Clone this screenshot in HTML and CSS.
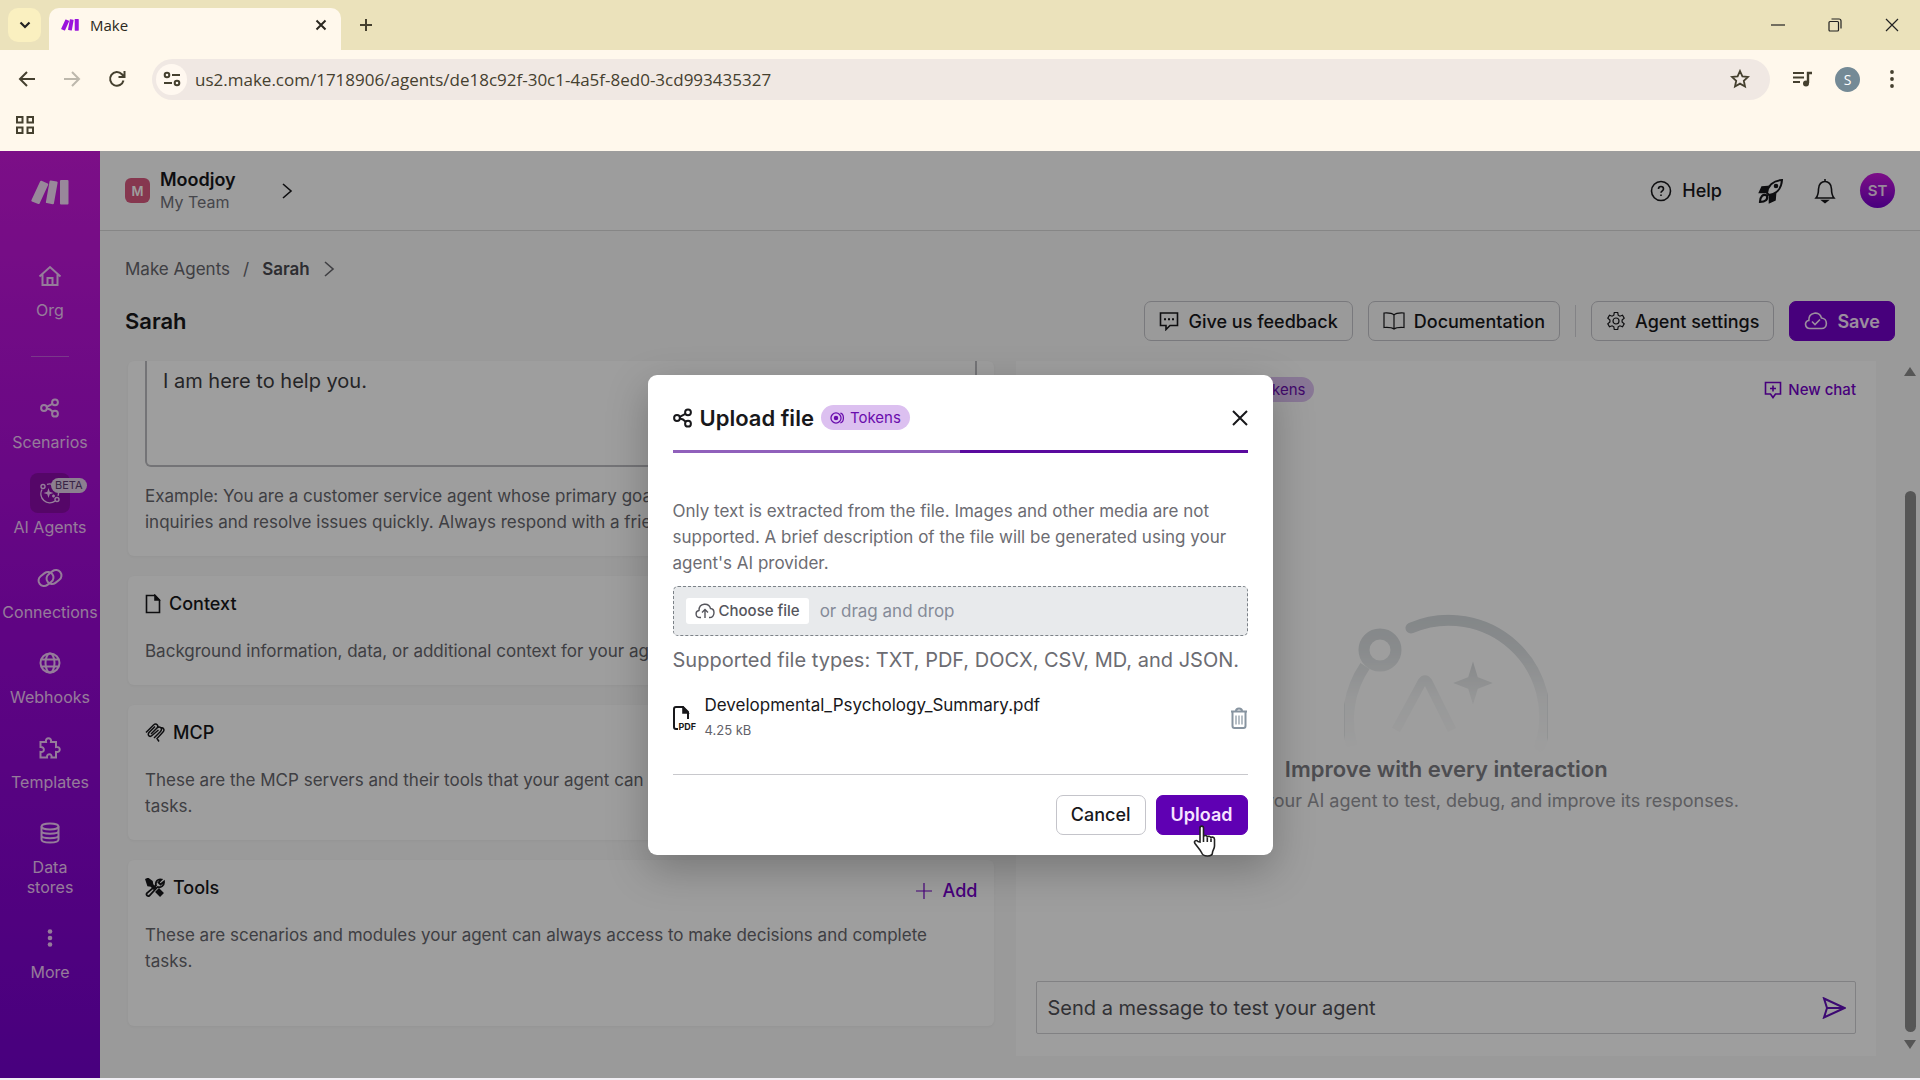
FILE: index.html
```html
<!DOCTYPE html>
<html lang="en">
<head>
    <meta charset="UTF-8">
    <meta name="viewport" content="width=device-width, initial-scale=1.0">
    <title>Make</title>
    <link rel="stylesheet" href="styles.css">
</head>
<body>
    <!-- shared icons -->
    <svg class="defs" width="0" height="0">
        <symbol id="logo" viewBox="0 0 38 25">
            <path d="M10.500 .8l6.200 2.700c.5.300.7.8.5 1.300L8.600 23.500c-.2.500-.8.700-1.300.5L.9 21.500c-.5-.3-.7-.8-.5-1.300L9.200 1.300c.2-.5.8-.7 1.300-.5z"/>
            <path d="M19.800.4l6 1.100c.6.100.9.6.8 1.200l-3.700 20.700c-.1.600-.6.900-1.200.8l-6-1.100c-.6-.1-.9-.6-.8-1.200L18.600 1.200c.1-.6.600-.9 1.200-.8z"/>
            <rect x="29" y="0" width="8.500" height="24.500" rx="1"/>
        </symbol>
        <symbol id="share" viewBox="0 0 20 20">
            <circle cx="4" cy="10" r="2.900"/><circle cx="15" cy="4.300" r="2.900"/><circle cx="15" cy="15.700" r="2.900"/>
            <path d="M6.700 8.900l5.700-3M6.900 10.400c3 .3 4.300 1.500 5.700 3.300"/>
        </symbol>
        <symbol id="chevron" viewBox="0 0 12 18"><path d="M2 2l8 7-8 7"/></symbol>
        <symbol id="coins" viewBox="0 0 20 16">
            <circle cx="7.500" cy="8" r="6.300"/><circle cx="7.500" cy="8" r="2" fill="currentColor"/><path d="M13 2c5 1 5 11 0 12"/>
        </symbol>
    </svg>

    <header class="browser">
        <div class="tabs">
            <button class="tab-search" aria-label="Search tabs"><svg width="12" height="8" viewBox="0 0 12 8"><path d="M1.500 1.500L6 6l4.500-4.500" stroke-width="2.200"/></svg></button>
            <div class="tab">
                <svg class="favicon" width="18" height="12"><use href="#logo"/></svg>
                <span>Make</span>
                <button class="tab-close" aria-label="Close tab"><svg width="12" height="12" viewBox="0 0 12 12"><path d="M1.500 1.500l9 9M10.500 1.500l-9 9" stroke-width="2"/></svg></button>
            </div>
            <button class="tab-new" aria-label="New tab"><svg width="14" height="14" viewBox="0 0 14 14"><path d="M7 1v12M1 7h12" stroke-width="2"/></svg></button>
            <div class="window-buttons">
                <button aria-label="Minimize"><svg width="14" height="14" viewBox="0 0 14 14"><path d="M0 7h14"/></svg></button>
                <button aria-label="Restore"><svg width="14" height="14" viewBox="0 0 14 14"><rect x="1" y="3.500" width="9.500" height="9.500" rx="1"/><path d="M3.500 1H11a2 2 0 0 1 2 2v7.500"/></svg></button>
                <button aria-label="Close"><svg width="14" height="14" viewBox="0 0 14 14"><path d="M1 1l12 12M13 1L1 13"/></svg></button>
            </div>
        </div>
        <div class="toolbar">
            <button aria-label="Back"><svg width="18" height="18" viewBox="0 0 18 18"><path d="M17 9H2.500M9 2L2 9l7 7" stroke-width="2"/></svg></button>
            <button class="off" aria-label="Forward"><svg width="18" height="18" viewBox="0 0 18 18"><path d="M1 9h14.500M9 2l7 7-7 7" stroke-width="2"/></svg></button>
            <button aria-label="Reload"><svg width="18" height="18" viewBox="0 0 18 18"><path d="M15.500 10.500a6.800 6.800 0 1 1-1.600-6.200L16 6.500M16.500 1v6h-6" stroke-width="2"/></svg></button>
            <div class="address">
                <span class="site-info"><svg width="18" height="16" viewBox="0 0 18 16"><circle cx="4" cy="4" r="2.300" stroke-width="2"/><circle cx="14" cy="12" r="2.300" stroke-width="2"/><path d="M9 4h8M1 12h8" stroke-width="2"/></svg></span>
                <input class="url" type="text" aria-label="Address" value="us2.make.com/1718906/agents/de18c92f-30c1-4a5f-8ed0-3cd993435327">
                <button aria-label="Bookmark"><svg width="20" height="20" viewBox="0 0 20 20"><path d="M10 2l2.400 5.300 5.600.6-4.200 3.900 1.200 5.700L10 14.600l-5 2.900 1.200-5.700L2 7.900l5.600-.6z" stroke-width="1.800"/></svg></button>
            </div>
            <button aria-label="Media controls"><svg width="20" height="16" viewBox="0 0 20 16"><path d="M0 2h11M0 6.500h11M0 11h7" stroke-width="2"/><path d="M15 12V2h4" stroke-width="2.400"/><circle cx="13" cy="12.500" r="3" fill="currentColor" stroke="none"/></svg></button>
            <span class="profile">S</span>
            <button aria-label="Browser menu"><svg width="4" height="18" viewBox="0 0 4 18"><g fill="currentColor" stroke="none"><circle cx="2" cy="2" r="1.900"/><circle cx="2" cy="9" r="1.900"/><circle cx="2" cy="16" r="1.900"/></g></svg></button>
        </div>
        <div class="bookmarks">
            <button aria-label="Apps"><svg width="18" height="18" viewBox="0 0 18 18"><path d="M1 1h5.500v5.500H1zM11.500 1H17v5.500h-5.500zM1 11.500h5.500V17H1zM11.500 11.500H17V17h-5.500z" stroke-width="2"/></svg></button>
        </div>
    </header>

    <div class="app">
        <nav class="sidebar">
            <svg class="logo" width="38" height="25"><use href="#logo"/></svg>
            <a href="#" class="nav-item">
                <span class="nav-icon"><svg width="24" height="22" viewBox="0 0 24 22"><path d="M1.500 11.500L12 2l10.500 9.500M4.500 9.500V20h15V9.500M9.500 20v-7h5v7"/></svg></span>
                Org
            </a>
            <hr>
            <a href="#" class="nav-item">
                <span class="nav-icon"><svg width="20" height="20"><use href="#share"/></svg></span>
                Scenarios
            </a>
            <a href="#" class="nav-item active">
                <span class="nav-icon">
                    <svg class="thin" width="22" height="22" viewBox="0 0 22 22"><path d="M8 2.300a9 9 0 0 1 11 11.500M16 19.200A9 9 0 0 1 3 7.500"/><circle cx="4" cy="4.500" r="2"/><circle cx="18" cy="17.500" r="2"/><path d="M9.500 6l1.200 3.800 3.800 1.200-3.800 1.200L9.500 16l-1.200-3.800L4.500 11l3.800-1.200z" fill="currentColor" stroke="none"/><path d="M14.500 12.500v3M13 14h3"/></svg>
                    <span class="beta">BETA</span>
                </span>
                AI Agents
            </a>
            <a href="#" class="nav-item">
                <span class="nav-icon"><svg width="26" height="22" viewBox="0 0 26 22"><rect x="1" y="6.500" width="16" height="11" rx="5.500" transform="rotate(-38 9 12)"/><rect x="9" y="4.500" width="16" height="11" rx="5.500" transform="rotate(-38 17 10)"/></svg></span>
                Connections
            </a>
            <a href="#" class="nav-item">
                <span class="nav-icon"><svg width="22" height="22" viewBox="0 0 22 22"><circle cx="11" cy="11" r="9.500"/><ellipse cx="11" cy="11" rx="4.500" ry="9.500"/><path d="M2.500 7.500h17M2.500 14.500h17"/></svg></span>
                Webhooks
            </a>
            <a href="#" class="nav-item">
                <span class="nav-icon"><svg width="22" height="22" viewBox="0 0 22 22"><path d="M1.500 5h5.500c-1-5 6-5 5 0h5v5c5-1 5 6 0 5v5.500h-4.500c1-4.500-5-4.500-4.500 0H1.500V15c4.500 1 4.500-5.500 0-5z"/></svg></span>
                Templates
            </a>
            <a href="#" class="nav-item">
                <span class="nav-icon"><svg width="20" height="22" viewBox="0 0 20 22"><ellipse cx="10" cy="4.500" rx="8.500" ry="3"/><path d="M1.500 4.500v13c0 4 17 4 17 0v-13M1.500 9c0 3.500 17 3.500 17 0M1.500 13.500c0 3.500 17 3.500 17 0"/></svg></span>
                Data<br>stores
            </a>
            <a href="#" class="nav-item">
                <span class="nav-icon"><svg width="6" height="18" viewBox="0 0 6 18"><g fill="currentColor" stroke="none"><circle cx="3" cy="2.500" r="2.300"/><circle cx="3" cy="9" r="2.300"/><circle cx="3" cy="15.500" r="2.300"/></g></svg></span>
                More
            </a>
        </nav>

        <div class="main">
            <div class="topbar">
                <span class="team-badge">M</span>
                <div class="team">
                    <strong>Moodjoy</strong>
                    <span>My Team</span>
                </div>
                <button class="team-open" aria-label="Switch team"><svg width="12" height="18"><use href="#chevron"/></svg></button>
                <div class="topbar-right">
                    <a href="#" class="help"><svg width="22" height="22" viewBox="0 0 22 22"><circle cx="11" cy="11" r="9.500"/><path d="M8.500 9c0-3.300 5-3.300 5 0 0 1.800-2.500 1.800-2.500 3.700M11 14.500v1.500"/></svg>Help</a>
                    <button aria-label="What's new"><svg width="26" height="26" viewBox="0 0 26 26"><path d="M9 15c1-7 6-12.500 15-13-.5 9-6 14-13 15z" stroke-width="2"/><circle cx="18" cy="8" r="1.500" fill="currentColor"/><path d="M10 8.500L4 9l-2.500 5.500H8zM17.500 16L17 22l-5.500 2.500V18z" fill="currentColor"/><path d="M9 17.500c-4-2-7 1-7 6.500 5.500 0 8-2.500 7-6.500z" stroke-width="2.200"/></svg></button>
                    <button aria-label="Notifications"><svg width="22" height="26" viewBox="0 0 22 26"><path d="M11 1v2.500M2 20c2-2.500 2.500-5 2.500-9 0-10 13-10 13 0 0 4 .5 6.500 2.500 9z"/><path d="M8.500 22.500h5l-2.500 2z" fill="currentColor"/></svg></button>
                    <span class="avatar">ST</span>
                </div>
            </div>

            <div class="breadcrumb">
                <a href="#">Make Agents</a>
                <span>/</span>
                <strong>Sarah</strong>
                <svg width="12" height="18"><use href="#chevron"/></svg>
            </div>

            <div class="title-row">
                <h1>Sarah</h1>
                <div class="actions">
                    <button class="btn"><svg width="20" height="20" viewBox="0 0 20 20"><path d="M1.500 2h17v12.500H11L7 18.500v-4H1.500z"/><path d="M5 8.300h2M9 8.300h2M13 8.300h2" stroke-width="2"/></svg>Give us feedback</button>
                    <button class="btn"><svg class="thin" width="22" height="20" viewBox="0 0 22 20"><path d="M11 4c-2-2-6-2.300-10-2v14.500c4-.3 8 0 10 1.500 2-1.500 6-1.800 10-1.500V2c-4-.3-8 0-10 2zm0 0v14"/></svg>Documentation</button>
                    <span class="separator"></span>
                    <button class="btn"><svg class="thin" width="20" height="20" viewBox="0 0 20 20"><circle cx="10" cy="10" r="3"/><path d="M8.300 1.500h3.400l.5 2.700 1.700 1 2.600-1 1.700 3-2.100 1.800v2l2.100 1.800-1.700 3-2.600-1-1.700 1-.5 2.700H8.300l-.5-2.700-1.700-1-2.600 1-1.700-3L3.900 11V9L1.800 7.200l1.700-3 2.600 1 1.700-1z"/></svg>Agent settings</button>
                    <button class="btn primary"><svg width="24" height="20" viewBox="0 0 24 20"><path d="M6 17.500C.5 17.500 0 10 4.800 9.500 4.500 1 15.500-.5 17.500 7c6.500.5 6.500 10.500 0 10.500z"/><path d="M8 10.500l3 3 5-5"/></svg>Save</button>
                </div>
            </div>

            <div class="columns">
                <div class="left">
                    <section class="card card-first">
                        <textarea class="prompt" aria-label="System prompt">I am here to help you.</textarea>
                        <p>Example: You are a customer service agent whose primary goal is to understand the customer's inquiries and resolve issues quickly. Always respond with a friendly and helpful tone.</p>
                    </section>
                    <section class="card">
                        <h2><svg width="16" height="20" viewBox="0 0 16 20"><path d="M1.500 1.500h8.500l4.500 4.500v12.500h-13z"/><path d="M10 1.500V6h4z" fill="currentColor"/></svg>Context</h2>
                        <p>Background information, data, or additional context for your agent.</p>
                    </section>
                    <section class="card">
                        <h2><svg width="20" height="20" viewBox="0 0 20 20"><path d="M1 9.500L8.500 2c3-2.500 5.500 1 3.500 3l-6 6M12 5c3-2.500 6 .5 3.500 3.500L9 15M10 3.500L4 9.500c-2 3 1 5 3 3L13.500 7M15.500 5c3-1 4.500 2 2.500 4l-6 6.500 2 3" stroke-width="1.500"/></svg>MCP</h2>
                        <p>These are the MCP servers and their tools that your agent can always access to complete<br>tasks.</p>
                    </section>
                    <section class="card card-last">
                        <h2><svg width="20" height="20" viewBox="0 0 20 20"><path d="M1 1.500l2-1 4 3 .5 3 3 3-1.500 1.500-3-3-3-.5z" fill="currentColor"/><path d="M12 12l5 5" stroke-width="5.500"/><path d="M12.500 9L4.500 17.500c-1.500 1.500-4-.5-2.500-2.500L11 7.500c-1-4 2-7 5.500-6L13.500 4.500l2 2L19 3.500c.5 4-3 6.500-6.500 5.500z" stroke-width="1.800"/></svg>Tools</h2>
                        <button class="add"><svg class="thin" width="18" height="18" viewBox="0 0 18 18"><path d="M9 1v16M1 9h16"/></svg>Add</button>
                        <p>These are scenarios and modules your agent can always access to make decisions and complete tasks.</p>
                    </section>
                </div>

                <section class="chat">
                    <div class="chat-head">
                        <span class="chat-title">Test your agent</span>
                        <span class="tokens"><svg width="16" height="14"><use href="#coins"/></svg>Tokens</span>
                        <button class="new-chat"><svg width="18" height="18" viewBox="0 0 18 18"><path d="M1.500 1.500h15v11.500h-5L9 16.500 6.500 13h-5zM9 4.500v6M6 7.500h6"/></svg>New chat</button>
                    </div>
                    <div class="empty">
                        <svg width="204" height="140" viewBox="0 0 204 140">
                            <defs>
                                <linearGradient id="fade" x1="0" y1="0" x2="0" y2="1">
                                    <stop offset="0" stop-color="#fff"/><stop offset=".25" stop-color="#fff" stop-opacity=".8"/><stop offset=".6" stop-color="#fff" stop-opacity=".25"/><stop offset="1" stop-color="#fff" stop-opacity="0"/>
                                </linearGradient>
                                <mask id="fade-mask"><rect width="204" height="140" fill="url(#fade)"/></mask>
                            </defs>
                            <g mask="url(#fade-mask)" fill="none" stroke="#d4d9dc" stroke-width="11">
                                <path d="M67 14A96 96 0 0 1 196 132" stroke-linecap="round"/>
                                <path d="M21 52A96 96 0 0 0 8 132"/>
                                <circle cx="36" cy="36" r="16"/>
                                <path d="M52 116L78 68c2-3 4-3 6 0l24 48" stroke-width="9"/>
                                <path d="M129 51l4 13 13 5-13 5-4 13-4-13-13-5 13-5z" fill="#c8cdd0" stroke="#c8cdd0" stroke-width="2"/>
                            </g>
                        </svg>
                        <h3>Improve with every interaction</h3>
                        <p>Interact with your AI agent to test, debug, and improve its responses.</p>
                    </div>
                    <div class="message">
                        <input type="text" placeholder="Send a message to test your agent" aria-label="Message">
                        <button aria-label="Send"><svg width="24" height="22" viewBox="0 0 24 22"><path d="M2 1.500L22.500 11 2 20.500 5 11zM5 11h17" stroke-width="2"/></svg></button>
                    </div>
                </section>

                <div class="scrollbar">
                    <span class="arrow-up"></span>
                    <span class="thumb"></span>
                    <span class="arrow-down"></span>
                </div>
            </div>
        </div>

        <div class="overlay">
            <div class="modal" role="dialog" aria-labelledby="modal-title">
                <div class="modal-head">
                    <svg class="bold" width="20" height="20"><use href="#share"/></svg>
                    <h2 id="modal-title">Upload file</h2>
                    <span class="tokens"><svg width="16" height="14"><use href="#coins"/></svg>Tokens</span>
                    <button class="modal-close" aria-label="Close dialog"><svg width="16" height="16" viewBox="0 0 16 16"><path d="M1 1l14 14M15 1L1 15" stroke-width="2"/></svg></button>
                </div>
                <div class="steps"><span></span><span></span></div>
                <p class="modal-text">Only text is extracted from the file. Images and other media are not supported. A brief description of the file will be generated using your agent's AI provider.</p>
                <div class="dropzone">
                    <label class="choose"><input type="file"><svg width="20" height="16" viewBox="0 0 20 16"><path d="M6 14.500H5C0 14.500 0 8 4 7.500 4-.5 14-.5 15.500 5.500c5 .5 4.500 9-1 9H14M10 15V7M7 9.500L10 6.500l3 3" stroke-width="1.400"/></svg>Choose file</label>
                    <span>or drag and drop</span>
                </div>
                <p class="types">Supported file types: TXT, PDF, DOCX, CSV, MD, and JSON.</p>
                <div class="file">
                    <span class="pdf-icon"><svg width="18" height="24" viewBox="0 0 18 24"><path d="M5 23H3a2 2 0 0 1-2-2V3a2 2 0 0 1 2-2h7l5 5v7" stroke-width="2"/><path d="M10 1v6h5z" fill="currentColor"/></svg><b>PDF</b></span>
                    <div class="file-info">
                        <span>Developmental_Psychology_Summary.pdf</span>
                        <small>4.25 kB</small>
                    </div>
                    <button class="trash" aria-label="Delete file"><svg width="18" height="22" viewBox="0 0 18 22"><path d="M1 4.500h16M6 4c0-3.500 6-3.500 6 0M2.500 5v14a2 2 0 0 0 2 2h9a2 2 0 0 0 2-2V5" stroke-width="2"/><path d="M6 8.500v9M9 8.500v9M12 8.500v9" stroke-width="1.200"/></svg></button>
                </div>
                <div class="modal-foot">
                    <button class="btn">Cancel</button>
                    <button class="btn primary upload">Upload
                        <svg class="cursor" width="26" height="32" viewBox="0 0 26 32"><path d="M9 17V3c0-2.500 3.500-2.500 3.500 0v9c0-2 3.800-2 3.800.5 0-2 3.700-1.500 3.700.7 0-1.700 3.500-1.500 3.500 1V21c0 3-2 4.500-2 6.500 0 2-1 3.500-5 3.500s-5-1-6-3.500c-1.500-3-4-5.500-6.500-9-1.500-2.500 1-4 3-2z" fill="#fff" stroke="#222"/><path d="M12.500 12v5M16.300 12.500V17M20 13.500V17" stroke="#222"/></svg>
                    </button>
                </div>
            </div>
        </div>
    </div>
</body>
</html>
```
FILE: styles.css
```css
* {
    margin: 0;
    padding: 0;
    box-sizing: border-box;
}
body {
    min-height: 100vh;
    display: flex;
    flex-direction: column;
    padding-bottom: 2px;
    background: #f1eff4;
    font-family: Inter, "Liberation Sans", sans-serif;
    font-size: 18px;
    color: #18181b;
}
button, input, textarea {
    font: inherit;
    color: inherit;
    border: 0;
    outline: 0;
    background: none;
}
button {
    display: flex;
    align-items: center;
    justify-content: center;
    cursor: pointer;
}
a {
    color: inherit;
    text-decoration: none;
}
svg {
    flex: none;
    fill: none;
    stroke: currentColor;
    stroke-width: 1.6;
}
svg.thin {
    stroke-width: 1.2;
}
svg.bold {
    stroke-width: 2;
}
.defs {
    position: absolute;
}

/* browser frame */
.browser {
    height: 151px;
    background: #fff8ec;
    color: #45402f;
    font-family: "Open Sans", "Noto Sans", sans-serif;
}
.tabs {
    display: flex;
    align-items: flex-end;
    height: 50px;
    padding-left: 8px;
    background: #ebe2bb;
}
.tab-search {
    width: 33px;
    height: 34px;
    margin: 0 8px 8px 0;
    border-radius: 10px;
    background: #faf0c0;
    color: #222;
}
.tab {
    display: flex;
    align-items: center;
    width: 292px;
    height: 42px;
    padding: 0 14px 8px 12px;
    border-radius: 10px 10px 0 0;
    background: #fff8ec;
    font-size: 15px;
    color: #2b2820;
}
.favicon {
    margin-right: 11px;
    fill: #9a12dc;
    stroke: none;
}
.tab-close {
    margin-left: auto;
}
.tab-new {
    width: 34px;
    height: 34px;
    margin: 0 0 8px 8px;
}
.window-buttons {
    display: flex;
    margin-left: auto;
    color: #222;
}
.window-buttons button {
    width: 57px;
    height: 50px;
}
.window-buttons svg {
    stroke-width: 1.2;
}
.toolbar {
    display: flex;
    align-items: center;
    height: 50px;
    margin-top: 4px;
    padding: 0 26px 0 18px;
    gap: 27px;
}
.toolbar .off {
    color: #bdb8ac;
}
.address {
    display: flex;
    align-items: center;
    flex: 1;
    height: 41px;
    margin: 0 -4px 0 -1px;
    padding: 0 20px 0 4px;
    border-radius: 21px;
    background: #f0e8e3;
}
.site-info {
    display: grid;
    place-items: center;
    width: 31px;
    height: 31px;
    border-radius: 50%;
    background: #fff8f0;
}
.url {
    flex: 1;
    padding-left: 8px;
    font-size: 17px;
}
.profile {
    display: grid;
    place-items: center;
    width: 25px;
    height: 25px;
    margin: 0 3px 0 -5px;
    border-radius: 50%;
    background: #748a96;
    color: #fff;
    font-size: 14px;
}
.bookmarks {
    display: flex;
    padding: 12px 16px;
}

/* app */
.app {
    position: relative;
    display: flex;
    flex: 1;
    background: #f8f8f8;
}
.sidebar {
    display: flex;
    flex-direction: column;
    align-items: center;
    gap: 21px;
    width: 100px;
    padding-top: 29px;
    background: linear-gradient(#c819da, #9b08d4 50%, #7400cb);
    color: #f0c8f8;
    font-size: 16px;
    line-height: 20px;
}
.logo {
    margin-bottom: 30px;
    fill: #f6dcf8;
    stroke: none;
}
.sidebar hr {
    width: 38px;
    margin: 15px 0 10px;
    border: 0;
    border-top: 1px solid #c65bdf;
}
.nav-item {
    display: flex;
    flex-direction: column;
    align-items: center;
    gap: 4px;
    text-align: center;
}
.nav-icon {
    position: relative;
    display: grid;
    place-items: center;
    width: 40px;
    height: 40px;
    border-radius: 8px;
}
.nav-icon svg {
    stroke-width: 2;
}
.nav-icon svg.thin {
    stroke-width: 1.4;
}
.active .nav-icon {
    background: #8a0aa8;
}
.beta {
    position: absolute;
    top: 5px;
    left: 21px;
    padding: 0 4px;
    border-radius: 8px;
    background: #e2cfe8;
    color: #5c3a70;
    font-size: 11px;
    line-height: 15px;
}

.main {
    display: flex;
    flex-direction: column;
    flex: 1;
    min-width: 0;
}
.topbar {
    display: flex;
    align-items: center;
    height: 80px;
    padding: 0 25px;
    border-bottom: 1px solid #d8d8d8;
    background: #fdfdfd;
}
.team-badge {
    display: grid;
    place-items: center;
    width: 25px;
    height: 25px;
    margin-right: 10px;
    border-radius: 6px;
    background: #d95a80;
    color: #fff;
    font-size: 13px;
    font-weight: 600;
}
.team {
    display: flex;
    flex-direction: column;
    line-height: 22px;
}
.team strong {
    font-weight: 600;
}
.team span {
    color: #72727a;
    font-size: 16px;
}
.team-open {
    margin-left: 45px;
}
.topbar-right {
    display: flex;
    align-items: center;
    gap: 26px;
    margin-left: auto;
}
.help {
    display: flex;
    align-items: center;
    gap: 10px;
    margin-right: 10px;
    font-weight: 500;
}
.topbar-right button {
    margin-right: 4px;
}
.avatar {
    display: grid;
    place-items: center;
    width: 35px;
    height: 35px;
    margin-left: -6px;
    border-radius: 50%;
    background: linear-gradient(#c819da, #7400cb);
    color: #f6dcf8;
    font-size: 15px;
    font-weight: 600;
}
.breadcrumb {
    display: flex;
    align-items: center;
    gap: 13px;
    padding: 26px 25px 0;
    color: #66666c;
    font-size: 17px;
    line-height: 24px;
}
.breadcrumb strong {
    color: #4a4a50;
    font-weight: 600;
}
.title-row {
    display: flex;
    align-items: center;
    justify-content: space-between;
    margin: 20px 25px;
}
h1 {
    font-size: 22px;
    font-weight: 600;
}
.actions {
    display: flex;
    gap: 15px;
}
.btn {
    gap: 9px;
    height: 40px;
    padding: 0 14px;
    border: 1px solid #c4c4ca;
    border-radius: 7px;
    font-weight: 500;
}
.btn.primary {
    border-color: #7300c8;
    background: #7300c8;
    color: #fbe6ff;
    font-weight: 600;
}
.separator {
    width: 1px;
    margin: 4px 0;
    background: #d4d4d8;
}

.columns {
    display: grid;
    grid-template-columns: 867fr 860fr 18px;
    flex: 1;
    padding: 0 4px 0 28px;
    column-gap: 22px;
}
.left {
    display: flex;
    flex-direction: column;
    gap: 20px;
}
.card {
    position: relative;
    padding: 16px 17px 21px;
    border-radius: 6px;
    background: #fff;
    box-shadow: 0 1px 3px #0000000a;
    color: #66666c;
    font-size: 17px;
    line-height: 26px;
}
.card-first {
    padding-top: 0;
}
.card-last {
    height: 166px;
}
.prompt {
    display: block;
    width: 100%;
    height: 106px;
    margin-bottom: 16px;
    padding: 7px 16px;
    border: 2px solid #bcbcc0;
    border-top: 0;
    border-radius: 0 0 6px 6px;
    color: #3c3c40;
    font-size: 20px;
    resize: none;
}
.card h2 {
    display: flex;
    align-items: center;
    gap: 8px;
    margin-bottom: 22px;
    color: #18181b;
    font-size: 18px;
    font-weight: 500;
    line-height: 24px;
}
.add {
    position: absolute;
    top: 18px;
    right: 17px;
    gap: 10px;
    color: #7300c8;
    font-size: 18px;
    font-weight: 500;
}

.chat {
    display: flex;
    flex-direction: column;
    margin-bottom: 22px;
    padding: 16px 20px 22px;
    background: #fff;
}
.chat-head {
    display: flex;
    align-items: center;
    gap: 10px;
}
.chat-title {
    width: 179px;
    font-weight: 600;
}
.tokens {
    display: flex;
    align-items: center;
    gap: 4px;
    height: 25px;
    padding: 0 9px;
    border-radius: 13px;
    background: #dcc0f0;
    color: #6a0dad;
    font-size: 15px;
}
.new-chat {
    gap: 6px;
    margin-left: auto;
    color: #7300c8;
    font-size: 15px;
    font-weight: 500;
}
.empty {
    display: flex;
    flex-direction: column;
    align-items: center;
    flex: 1;
    padding-top: 212px;
    color: #96969c;
}
.empty h3 {
    color: #7d7d83;
    font-size: 22px;
    font-weight: 600;
    line-height: 30px;
}
.empty p {
    line-height: 34px;
}
.message {
    display: flex;
    align-items: center;
    height: 53px;
    padding: 0 9px 0 10px;
    border: 1px solid #d0d0d4;
    border-radius: 2px;
}
.message input {
    flex: 1;
    font-size: 20px;
}
.message input::placeholder {
    color: #505056;
}
.message button {
    color: #6210b8;
}
.scrollbar {
    display: flex;
    flex-direction: column;
    align-items: center;
    justify-self: end;
    width: 12px;
    padding: 6px 0 29px;
}
.arrow-up, .arrow-down {
    border: 6px solid transparent;
    border-top-width: 0;
    border-bottom: 9px solid #8c8c8c;
}
.arrow-down {
    border-top: 9px solid #8c8c8c;
    border-bottom-width: 0;
}
.thumb {
    flex: 1;
    width: 11px;
    margin: 115px 0 8px;
    border-radius: 6px;
    background: #8c8c8c;
}

/* upload dialog */
.overlay {
    position: absolute;
    inset: 0;
    display: grid;
    place-items: center;
    background: rgba(0, 0, 0, .38);
}
.modal {
    width: 625px;
    padding: 25px 25px 20px;
    border-radius: 9px;
    background: #fff;
    box-shadow: 0 14px 40px rgba(0, 0, 0, .25);
}
.modal-head {
    display: flex;
    align-items: center;
    gap: 7px;
    height: 36px;
    margin-bottom: 14px;
}
.modal-head h2 {
    font-size: 22px;
    font-weight: 600;
}
.modal-close {
    margin-left: auto;
}
.steps {
    display: grid;
    grid-template-columns: 1fr 1fr;
    height: 3px;
    margin-bottom: 45px;
    background: #5a0a9e;
}
.steps span:first-child {
    background: #9060bb;
}
.modal-text {
    margin-bottom: 10px;
    color: #6c6c72;
    font-size: 17px;
    line-height: 26px;
}
.dropzone {
    display: flex;
    align-items: center;
    gap: 11px;
    height: 50px;
    padding: 0 12px;
    border: 1px dashed #7c8288;
    border-radius: 5px;
    background: #e8eaec;
    color: #858b98;
    font-size: 17px;
}
.choose {
    display: flex;
    align-items: center;
    gap: 4px;
    height: 26px;
    padding: 0 9px;
    border-radius: 3px;
    background: #fff;
    color: #55555c;
    font-size: 15px;
    font-weight: 500;
    cursor: pointer;
}
.choose input {
    position: absolute;
    width: 1px;
    height: 1px;
    opacity: 0;
}
.types {
    margin: 10px 0 20px;
    color: #6c6c72;
    font-size: 20px;
    line-height: 28px;
}
.file {
    display: flex;
    align-items: center;
    height: 49px;
    margin-bottom: 31px;
}
.pdf-icon {
    position: relative;
    width: 32px;
    height: 24px;
}
.pdf-icon b {
    position: absolute;
    left: 6px;
    bottom: -1px;
    background: #fff;
    font-size: 9px;
    line-height: 9px;
}
.file-info {
    display: flex;
    flex-direction: column;
    font-size: 17px;
    line-height: 25px;
}
.file-info small {
    color: #62626a;
    font-size: 13px;
}
.trash {
    margin-left: auto;
    color: #8794a0;
}
.modal-foot {
    display: flex;
    justify-content: flex-end;
    gap: 10px;
    padding-top: 20px;
    border-top: 1px solid #c8c8cc;
}
.btn.upload {
    position: relative;
    border-color: #5f00b3;
    background: #5f00b3;
    color: #f7e4ff;
}
.cursor {
    position: absolute;
    top: 29px;
    left: 34px;
}
```
